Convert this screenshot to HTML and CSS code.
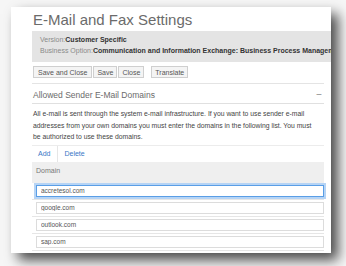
FILE: index.html
```html
<!DOCTYPE html>
<html lang="en">
<head>
    <meta charset="UTF-8">
    <title>E-Mail and Fax Settings</title>
    <link rel="stylesheet" href="styles.css">
</head>
<body>
    <div class="panel">
        <h1 class="title">E-Mail and Fax Settings</h1>

        <div class="info">
            <p><span class="label">Version:</span><b>Customer Specific</b></p>
            <p><span class="label">Business Option:</span><b>Communication and Information Exchange: Business Process Management</b></p>
        </div>

        <div class="actions">
            <button>Save and Close</button>
            <button>Save</button>
            <button>Close</button>
            <button class="spaced">Translate</button>
        </div>

        <div class="section-head">
            <span>Allowed Sender E-Mail Domains</span>
            <span class="collapse">&minus;</span>
        </div>

        <p class="note">All e-mail is sent through the system e-mail infrastructure. If you want to use sender e-mail addresses from your own domains you must enter the domains in the following list. You must be authorized to use these domains.</p>

        <div class="toolbar">
            <a href="#">Add</a>
            <a href="#">Delete</a>
        </div>

        <div class="table-head">Domain</div>
        <div class="row"><input class="focused" type="text" value="accretesol.com"></div>
        <div class="row"><input type="text" value="google.com"></div>
        <div class="row"><input type="text" value="outlook.com"></div>
        <div class="row"><input type="text" value="sap.com"></div>
    </div>
</body>
</html>
```

FILE: styles.css
```css
* {
    box-sizing: border-box;
    margin: 0;
    padding: 0;
}
body {
    font-family: "Liberation Sans", Arial, sans-serif;
    background: #f6f6f6;
    width: 346px;
    height: 266px;
    overflow: hidden;
    padding: 7px 0 0 11px;
}
.panel {
    background: white;
    width: 320px;
    height: 246px;
    overflow: hidden;
    padding: 0 7px 0 21px;
    box-shadow: 7px 7px 12px rgba(0, 0, 0, 0.7);
}
.title {
    font-size: 15px;
    font-weight: normal;
    color: #6b6b6b;
    height: 24px;
    padding-top: 5px;
    line-height: 15px;
    padding-left: 1px;
}
.info {
    background: #e4e4e4;
    margin-right: -7px;
    height: 31px;
    padding: 3px 0 0 8px;
    font-size: 7px;
    line-height: 11px;
    white-space: nowrap;
    overflow: hidden;
}
.info .label {
    color: #8a8a8a;
}
.info b {
    color: #333;
}
.actions {
    display: flex;
    gap: 1px;
    padding: 4px 0 0 1px;
    height: 22px;
    border-bottom: 1px solid #e4e4e4;
}
.actions button {
    font-family: inherit;
    font-size: 7px;
    color: #555;
    background: #f4f4f4;
    border: 1px solid #cfcfcf;
    height: 12px;
    padding: 0 3px;
}
.actions button:first-child {
    padding: 0 4px;
}
.actions .spaced {
    margin-left: 6px;
}
.section-head {
    display: flex;
    justify-content: space-between;
    align-items: center;
    height: 20px;
    padding: 2px 2px 0 1px;
    font-family: "Liberation Sans Narrow", "Liberation Sans", sans-serif;
    font-size: 8.5px;
    color: #6b6b6b;
    border-bottom: 1px solid #e0e0e0;
}
.collapse {
    font-size: 10px;
    color: #888;
}
.note {
    font-size: 6.8px;
    line-height: 11.5px;
    color: #444;
    padding: 4px 4px 0 1px;
}
.toolbar {
    display: flex;
    height: 17px;
    border-top: 1px solid #ececec;
    margin-top: 2px;
}
.toolbar a {
    font-size: 7px;
    color: #3a77c6;
    text-decoration: none;
    line-height: 15px;
    padding: 0 6px;
}
.toolbar a:first-child {
    border-right: 1px solid #e6e6e6;
    padding-right: 7px;
}
.table-head {
    background: #efefef;
    height: 21px;
    font-size: 7px;
    color: #777;
    line-height: 18px;
    padding-left: 4px;
}
.row {
    height: 17px;
    padding: 2px 0 0 4px;
    border-bottom: 1px solid #e6e6e6;
}
.row input {
    display: block;
    width: 100%;
    height: 12px;
    border: 1px solid #dcdcdc;
    font-family: inherit;
    font-size: 6.5px;
    color: #555;
    padding: 0 4px;
    outline: none;
}
.row input.focused {
    border-color: #5a9ee6;
    box-shadow: 0 0 0 2px #b6d4f5;
}
```
